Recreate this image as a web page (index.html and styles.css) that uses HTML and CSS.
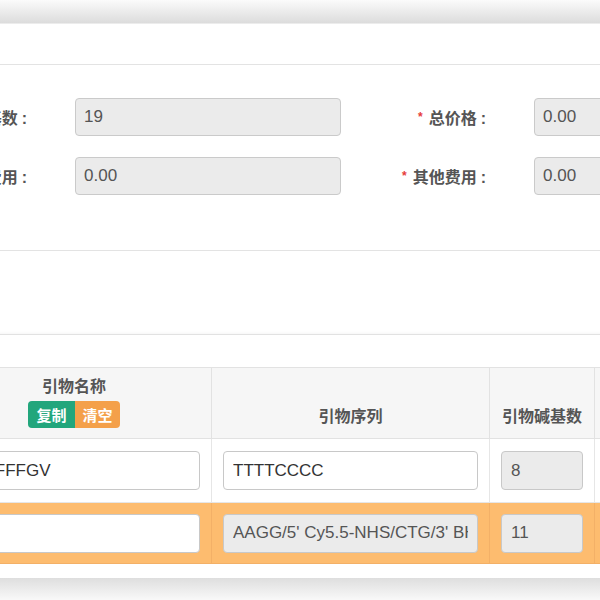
FILE: index.html
```html
<!DOCTYPE html>
<html lang="zh-CN">
<head>
    <meta charset="UTF-8">
    <meta name="viewport" content="width=device-width, initial-scale=1.0">
    <title>引物订单</title>
    <link rel="stylesheet" href="styles.css">
</head>
<body>

    <div class="shade-top"></div>

    <div class="panel">
        <div class="panel-head"></div>

        <div class="form-section">
            <div class="form-grid">
                <label class="form-label">总碱基数<span class="colon">:</span></label>
                <input class="form-input" type="text" value="19" readonly>
                <span></span>
                <label class="form-label"><i class="req">*</i>总价格<span class="colon">:</span></label>
                <input class="form-input" type="text" value="0.00" readonly>

                <label class="form-label">合成费用<span class="colon">:</span></label>
                <input class="form-input" type="text" value="0.00" readonly>
                <span></span>
                <label class="form-label"><i class="req">*</i>其他费用<span class="colon">:</span></label>
                <input class="form-input" type="text" value="0.00" readonly>
            </div>
        </div>

        <div class="blank-section"></div>
        <div class="blank-gap"></div>

        <table class="primer-table">
            <colgroup>
                <col class="col-name">
                <col class="col-seq">
                <col class="col-base">
                <col class="col-more">
            </colgroup>
            <thead>
                <tr>
                    <th>
                        <div class="th-title">引物名称</div>
                        <div class="btn-group">
                            <button class="btn btn-copy">复制</button><button class="btn btn-clear">清空</button>
                        </div>
                    </th>
                    <th><div class="th-title">引物序列</div></th>
                    <th><div class="th-title">引物碱基数</div></th>
                    <th></th>
                </tr>
            </thead>
            <tbody>
                <tr>
                    <td><input class="cell-input" type="text" value="Test-FFFGV"></td>
                    <td><input class="cell-input" type="text" value="TTTTCCCC"></td>
                    <td><input class="cell-input is-readonly" type="text" value="8" readonly></td>
                    <td></td>
                </tr>
                <tr class="row-warn">
                    <td><input class="cell-input" type="text" value=""></td>
                    <td><input class="cell-input is-readonly" type="text" value="AAGG/5' Cy5.5-NHS/CTG/3' BHQ2/" readonly></td>
                    <td><input class="cell-input is-readonly" type="text" value="11" readonly></td>
                    <td></td>
                </tr>
            </tbody>
        </table>

        <div class="panel-foot"></div>
    </div>

    <div class="shade-bottom"></div>

</body>
</html>
```

FILE: styles.css
```css
/* Reset */
* {
    margin: 0;
    padding: 0;
    box-sizing: border-box;
}

html, body {
    width: 600px;
    height: 600px;
    overflow: hidden;
}

body {
    font-family: "Liberation Sans", "Noto Sans CJK SC", sans-serif;
    background-color: #ffffff;
    color: #555555;
}

/* window shadow above and below the panel */
.shade-top {
    height: 23px;
    background: linear-gradient(to bottom, #fbfbfb, #dcdcdc);
}

.shade-bottom {
    height: 23px;
    background: linear-gradient(to bottom, #dedede, #fafafa);
}

.panel {
    background-color: #ffffff;
    border-top: 1px solid #ececec;
}

.panel-head {
    height: 41px;
    border-bottom: 1px solid #e3e3e3;
}

/* Summary form */
.form-section {
    padding: 33px 0 55px;
    border-bottom: 1px solid #e3e3e3;
}

.form-grid {
    display: grid;
    grid-template-columns: 165px 266px 28px 165px 266px;
    row-gap: 21px;
    align-items: center;
    margin-left: -90px;
    width: 890px;
}

.form-label {
    padding-right: 48px;
    text-align: right;
    font-size: 16px;
    font-weight: bold;
    color: #555555;
    white-space: nowrap;
}

.colon {
    margin-left: 4px;
}

.req {
    font-style: normal;
    color: #e63b3b;
    font-size: 12px;
    margin-right: 6px;
    position: relative;
    top: -3px;
}

.form-input {
    height: 38px;
    padding: 0 8px;
    font-family: inherit;
    font-size: 17px;
    color: #555555;
    background-color: #ebebeb;
    border: 1px solid #cacaca;
    border-radius: 4px;
    outline: none;
}

.blank-section {
    height: 84px;
    border-bottom: 1px solid #e2e2e2;
    box-shadow: inset 0 -3px 3px -2px rgba(0, 0, 0, 0.04);
}

.blank-gap {
    height: 32px;
}

/* Primer table */
.primer-table {
    border-collapse: collapse;
    table-layout: fixed;
    width: 808px;
    margin-left: -64px;
}

.col-name { width: 275px; }
.col-seq { width: 278px; }
.col-base { width: 105px; }
.col-more { width: 150px; }

.primer-table th {
    height: 71px;
    background-color: #f6f6f6;
    border: 1px solid #e2e2e2;
    vertical-align: bottom;
    padding: 0 0 10px;
    font-size: 16px;
    font-weight: bold;
    color: #555555;
    text-align: center;
}

.th-title {
    line-height: 22px;
}

.btn-group {
    display: inline-flex;
    margin-top: 3px;
    border-radius: 4px;
    overflow: hidden;
}

.btn {
    height: 27px;
    padding: 0;
    border: none;
    font-family: inherit;
    font-size: 15px;
    font-weight: bold;
    color: #ffffff;
    white-space: nowrap;
    cursor: pointer;
}

.btn-copy {
    width: 47px;
    background-color: #22a67c;
}

.btn-clear {
    width: 45px;
    background-color: #f4a04a;
}

.primer-table td {
    height: 64px;
    padding: 0 11px;
    border: 1px solid #e6e6e6;
    vertical-align: middle;
    background-color: #ffffff;
}

.primer-table tr.row-warn td {
    height: 61px;
    background-color: #fdbc6f;
    border-color: #f3b067;
}

.cell-input {
    display: block;
    width: 100%;
    height: 39px;
    padding: 0 9px;
    font-family: inherit;
    font-size: 17px;
    color: #333333;
    background-color: #ffffff;
    border: 1px solid #c8c8c8;
    border-radius: 4px;
    outline: none;
}

.cell-input.is-readonly {
    background-color: #ebebeb;
    color: #555555;
}

.panel-foot {
    height: 14px;
}
```
